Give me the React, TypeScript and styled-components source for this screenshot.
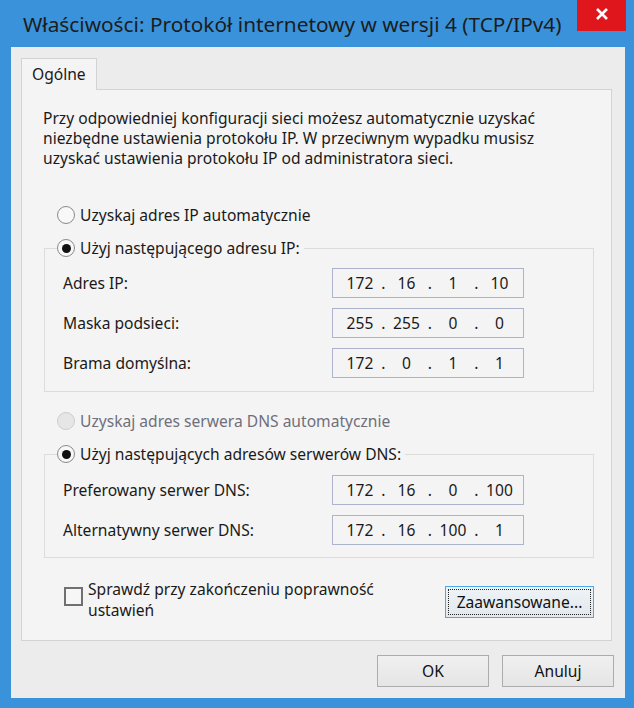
import React from 'react';
import styled, { createGlobalStyle } from 'styled-components';

const GlobalStyle = createGlobalStyle`
	html, body {
		margin: 0;
		padding: 0;
		background: #3a93da;
	}
	body {
		font-family: "Noto Sans", "Open Sans", sans-serif;
		font-size: 15.6px;
		color: #1a1a1a;
	}
`;

type IpProps = { parts: string[] };

const IpField = ({ parts }: IpProps) => (
	<IpBox>
		{parts.map((p, i) => (
			<React.Fragment key={i}>
				{i > 0 && <IpDot>.</IpDot>}
				<IpPart>{p}</IpPart>
			</React.Fragment>
		))}
	</IpBox>
);

type RadioProps = { checked?: boolean; disabled?: boolean; children: React.ReactNode };

const Radio = ({ checked, disabled, children }: RadioProps) => (
	<RadioRow $disabled={disabled}>
		<RadioCircle $disabled={disabled}>{checked && <RadioDot />}</RadioCircle>
		<span>{children}</span>
	</RadioRow>
);

class App extends React.Component {

	render() {
		return <Window>
			<GlobalStyle />
			<TitleBar>
				<Title>Właściwości: Protokół internetowy w wersji 4 (TCP/IPv4)</Title>
				<CloseButton>
					<svg width="14" height="12" viewBox="0 0 14 12">
						<path d="M2 1 L12 11 M12 1 L2 11" stroke="#fff" strokeWidth="2.6" />
					</svg>
				</CloseButton>
			</TitleBar>
			<Content>
				<TabStrip>
					<Tab>Ogólne</Tab>
				</TabStrip>
				<Panel>
					<Description>
						Przy odpowiedniej konfiguracji sieci możesz automatycznie uzyskać<br />
						niezbędne ustawienia protokołu IP. W przeciwnym wypadku musisz<br />
						uzyskać ustawienia protokołu IP od administratora sieci.
					</Description>
					<Section>
						<StandaloneRadio>
							<Radio>Uzyskaj adres IP automatycznie</Radio>
						</StandaloneRadio>
						<Group $top={13}>
							<Legend><Radio checked>Użyj następującego adresu IP:</Radio></Legend>
							<FieldGrid $pad="10px 0 13px 18px">
								<Label>Adres IP:</Label>
								<IpField parts={['172', '16', '1', '10']} />
								<Label>Maska podsieci:</Label>
								<IpField parts={['255', '255', '0', '0']} />
								<Label>Brama domyślna:</Label>
								<IpField parts={['172', '0', '1', '1']} />
							</FieldGrid>
						</Group>
						<StandaloneRadio $top={19}>
							<Radio disabled>Uzyskaj adres serwera DNS automatycznie</Radio>
						</StandaloneRadio>
						<Group $top={13}>
							<Legend><Radio checked>Użyj następujących adresów serwerów DNS:</Radio></Legend>
							<FieldGrid $pad="11px 0 12px 18px">
								<Label>Preferowany serwer DNS:</Label>
								<IpField parts={['172', '16', '0', '100']} />
								<Label>Alternatywny serwer DNS:</Label>
								<IpField parts={['172', '16', '100', '1']} />
							</FieldGrid>
						</Group>
						<BottomRow>
							<CheckRow>
								<CheckBox />
								<CheckLabel>Sprawdź przy zakończeniu poprawność<br />ustawień</CheckLabel>
							</CheckRow>
							<AdvancedButton><FocusRect>Zaawansowane...</FocusRect></AdvancedButton>
						</BottomRow>
					</Section>
				</Panel>
				<ButtonRow>
					<Button>OK</Button>
					<Button>Anuluj</Button>
				</ButtonRow>
			</Content>
		</Window>;
	}
}

const Window = styled.div`
	width: 634px;
	height: 708px;
	background: #3a93da;
	display: flex;
	flex-direction: column;
	box-sizing: border-box;
`;

const TitleBar = styled.div`
	height: 47px;
	display: flex;
	align-items: flex-start;
	justify-content: space-between;
`;

const Title = styled.div`
	font-size: 20.8px;
	color: #1c1c1c;
	padding: 10px 0 0 23px;
	white-space: nowrap;
`;

const CloseButton = styled.div`
	width: 49px;
	height: 31px;
	margin-right: 8px;
	background: #e0161d;
	display: flex;
	align-items: center;
	justify-content: center;
	padding-bottom: 3px;
	box-sizing: border-box;
`;

const Content = styled.div`
	margin: 0 9px 10px 11px;
	height: 651px;
	background: #ececec;
	padding: 11px 13px 0 10px;
	box-sizing: border-box;
	display: flex;
	flex-direction: column;
`;

const TabStrip = styled.div`
	display: flex;
	height: 31px;
`;

const Tab = styled.div`
	position: relative;
	z-index: 1;
	width: 76px;
	height: 32px;
	box-sizing: border-box;
	border: 1px solid #d3d3d3;
	border-bottom: none;
	background: #f4f4f4;
	padding: 4px 0 0 10px;
`;

const Panel = styled.div`
	height: 552px;
	box-sizing: border-box;
	border: 1px solid #d3d3d3;
	background: #f4f4f4;
	padding: 18px 0 0 21px;
`;

const Description = styled.div`
	line-height: 20px;
	white-space: nowrap;
`;

const Section = styled.div`
	margin: 37px 0 0 1px;
	width: 550px;
`;

const StandaloneRadio = styled.div<{ $top?: number }>`
	padding-left: 13px;
	margin-top: ${p => p.$top ?? 0}px;
`;

const RadioRow = styled.label<{ $disabled?: boolean }>`
	display: flex;
	align-items: center;
	height: 20px;
	gap: 5px;
	white-space: nowrap;
	color: ${p => (p.$disabled ? '#6f6f7a' : '#1a1a1a')};
`;

const RadioCircle = styled.span<{ $disabled?: boolean }>`
	flex: none;
	width: 18px;
	height: 18px;
	box-sizing: border-box;
	border-radius: 50%;
	border: 1px solid ${p => (p.$disabled ? '#cdcdcd' : '#8a8a8a')};
	background: ${p => (p.$disabled ? '#e6e6e6' : '#f8f8f8')};
	display: flex;
	align-items: center;
	justify-content: center;
`;

const RadioDot = styled.span`
	width: 9px;
	height: 9px;
	border-radius: 50%;
	background: #111;
`;

const Group = styled.fieldset<{ $top: number }>`
	margin: ${p => p.$top}px 0 0 0;
	padding: 0;
	border: 1px solid #dcdcdc;
	min-width: 0;
`;

const Legend = styled.legend`
	margin-left: 12px;
	padding: 0 4px 0 0;
`;

const FieldGrid = styled.div<{ $pad: string }>`
	display: grid;
	grid-template-columns: 269px 192px;
	row-gap: 10px;
	align-items: center;
	padding: ${p => p.$pad};
`;

const Label = styled.div`
	white-space: nowrap;
`;

const IpBox = styled.div`
	height: 30px;
	box-sizing: border-box;
	border: 1px solid #abb4cb;
	background: #f4f4f4;
	display: flex;
	align-items: center;
	padding-left: 8px;
`;

const IpPart = styled.span`
	width: 38px;
	text-align: center;
`;

const IpDot = styled.span`
	width: 8.5px;
	text-align: center;
`;

const BottomRow = styled.div`
	margin-top: 21px;
	display: flex;
	justify-content: space-between;
	align-items: flex-start;
`;

const CheckRow = styled.label`
	display: flex;
	align-items: flex-start;
	padding-left: 20px;
	gap: 5px;
`;

const CheckBox = styled.span`
	flex: none;
	width: 19px;
	height: 19px;
	margin-top: 8px;
	box-sizing: border-box;
	border: 2px solid #707070;
	background: #f6f6f6;
`;

const CheckLabel = styled.span`
	line-height: 21px;
	white-space: nowrap;
`;

const AdvancedButton = styled.div`
	width: 149px;
	height: 32px;
	margin-top: 7px;
	box-sizing: border-box;
	border: 1px solid #4aa8ee;
	background: linear-gradient(#eef3f8, #e3e8ee);
	padding: 2px;
	display: flex;
`;

const FocusRect = styled.span`
	flex: 1;
	border: 1px dotted #222;
	display: flex;
	align-items: center;
	justify-content: center;
	color: #111;
`;

const ButtonRow = styled.div`
	margin-top: 14px;
	display: flex;
	justify-content: flex-end;
	gap: 13px;
	margin-right: -2px;
`;

const Button = styled.div`
	width: 112px;
	height: 32px;
	box-sizing: border-box;
	border: 1px solid #acacac;
	background: linear-gradient(#f0f0f0, #e5e5e5);
	display: flex;
	align-items: center;
	justify-content: center;
	color: #111;
`;

export default App;
